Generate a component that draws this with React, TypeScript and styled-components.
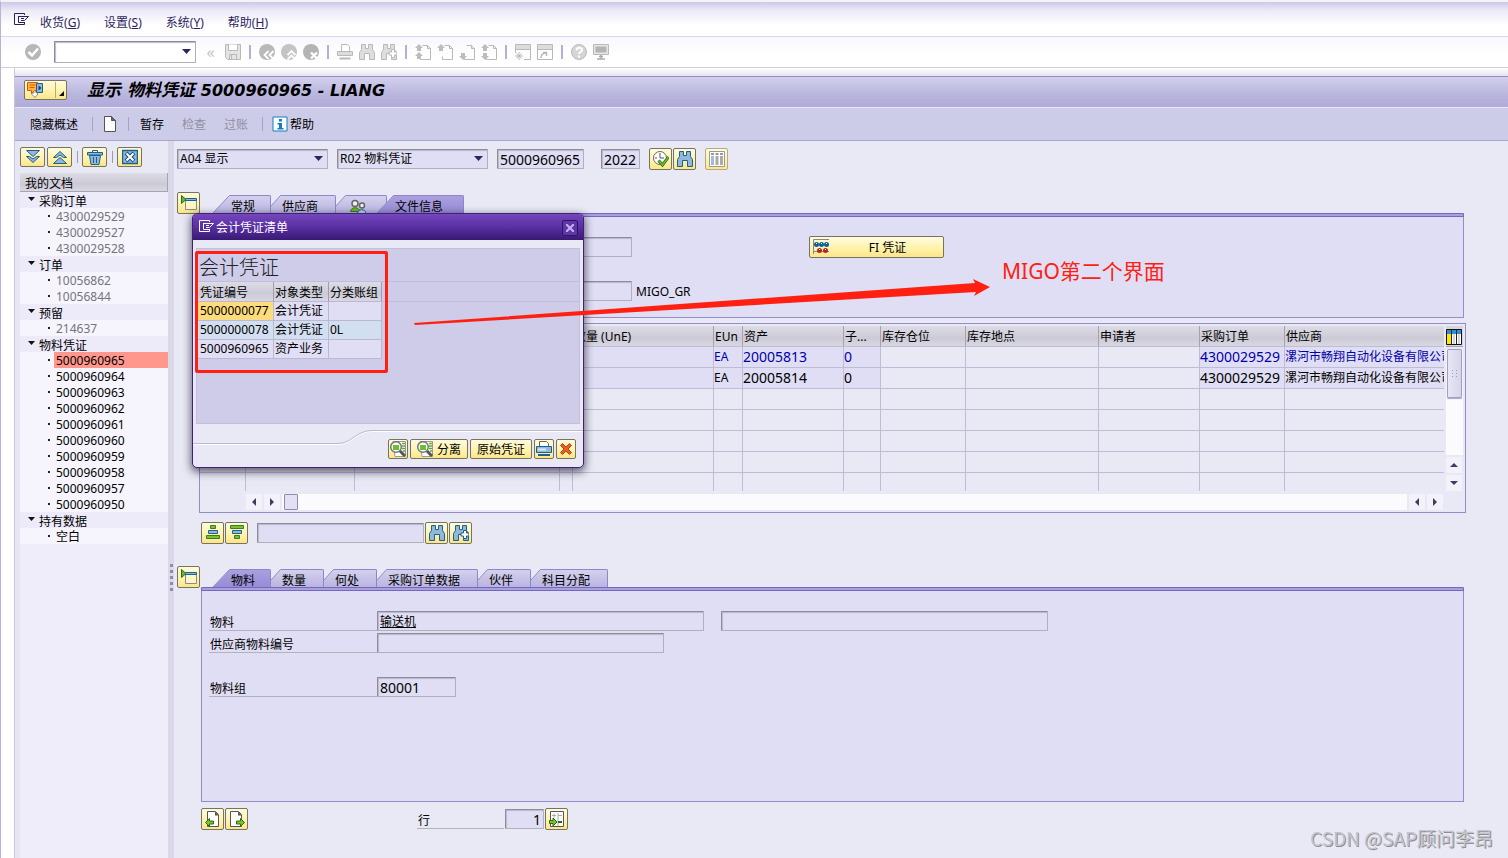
import React from "react";
import styled, { createGlobalStyle } from "styled-components";

const SANS = '"Noto Sans", "Noto Sans CJK SC", sans-serif';

const GlobalStyle = createGlobalStyle`
  *, *::before { box-sizing: border-box; }
  body { margin: 0; background: #e9e9f5; }
  button, input, select { font: inherit; color: inherit; margin: 0; }
  h1, h2 { margin: 0; font-weight: 400; }
`;

/* ---------- icons ---------- */

type IconName =
  | "menu" | "ok" | "save" | "back" | "up" | "cancel" | "print" | "find" | "findNext"
  | "blueFind" | "blueFindNext"
  | "pageTop" | "pageUp" | "pageDown" | "pageEnd" | "session" | "shortcut" | "help" | "monitor"
  | "services" | "doc" | "info" | "expandAll" | "collapseAll" | "trash" | "closeBox"
  | "execute" | "columns" | "overview" | "people" | "balls" | "asc" | "desc"
  | "prevItem" | "nextItem" | "gotoItem" | "details" | "printColor" | "redX" | "config";

const G = "#b9b9b9";
const B = "#1f5f8e";
const LB = "#8fb8da";

const binoculars = (stroke: string, fill: string) => (
  <path d="M2.500.5h4v4h3v-4h4v5l2 3v7h-5v-6h-5v6h-5v-7l2-3z" fill={fill} stroke={stroke} />
);
const plusMark = (stroke: string) => (
  <path d="M10.500 5.500h3v2.500h2.500v3h-2.500v2.500h-3v-2.500h-2.500v-3h2.500z" fill="#fff" stroke={stroke} />
);

const page = <path d="M7.500 1.500h5l3 3v11h-10v-3M12.500 1.500v3h3" fill="none" stroke={G} />;
const upArrow = (y: number) => <path d={`M4 ${y}l4 4h-2v3h-4v-3h-2z`} fill="#bdbdbd" />;
const downArrow = (y: number) => <path d={`M4 ${y}l4-4h-2v-3h-4v3h-2z`} fill="#bdbdbd" />;

const drawings: Record<IconName, React.ReactNode> = {
  menu: <path d="M11.500 3V1.500H1.500v11h10V10M5.500 4.500H15.500l-4 4H8M5.500 4v6.500h6M8 6.500h3M8 8.500h2" fill="none" stroke="currentColor" />,
  ok: <><circle cx="8" cy="8" r="8" fill="#b7b7b7" /><path d="M3.500 8l3.500 3.500 6-7" fill="none" stroke="#fff" strokeWidth="2.500" /></>,
  save: <><path d="M.5.5h15v15h-13l-2-2z" fill="#e4e4e4" stroke={G} /><path d="M3.500.5v6h9v-6" fill="#fff" stroke={G} /><path d="M4.500 15.500v-5h7v5M6.500 11v4" fill="none" stroke={G} /></>,
  back: <><circle cx="8" cy="8" r="8" fill={G} /><path d="M9.500 7l-4 4 4 4M14.500 7l-4 4 4 4" fill="none" stroke="#fff" strokeWidth="1.800" /></>,
  up: <><circle cx="8" cy="8" r="8" fill="#c4c4c4" /><path d="M6.500 11l4-4 4 4M6.500 15.500l4-4 4 4" fill="none" stroke="#fff" strokeWidth="1.800" /></>,
  cancel: <><circle cx="8" cy="8" r="8" fill="#b4b4b4" /><path d="M8 8.500l6 6M14 8.500l-6 6" fill="none" stroke="#fff" strokeWidth="2.400" /></>,
  print: <><path d="M4.500 7V.5h6l2 2V7" fill="#fff" stroke={G} /><path d="M.5 7.500h15v4h-15z" fill="#dcdcdc" stroke={G} /><path d="M2.500 14.500h11" stroke={G} strokeWidth="2" /></>,
  find: binoculars(G, "#dedede"),
  findNext: <>{binoculars(G, "#dedede")}{plusMark(G)}</>,
  blueFind: binoculars(B, LB),
  blueFindNext: <>{binoculars(B, LB)}{plusMark(B)}</>,
  pageTop: <>{page}{upArrow(0)}{upArrow(8)}</>,
  pageUp: <>{page}{upArrow(0)}</>,
  pageDown: <>{page}{downArrow(16)}</>,
  pageEnd: <>{page}{upArrow(0)}{downArrow(16)}</>,
  session: <><path d="M.5 9V.5h15v15H9" fill="none" stroke={G} /><path d="M1 1h14v4H1z" fill="#dcdcdc" /><path d="M.5 5.500h15M4 8v8M0 12h8M1.500 9.500l5 5M6.500 9.500l-5 5" stroke={G} /></>,
  shortcut: <><path d="M.5.5h15v15H.5z" fill="#fff" stroke={G} /><path d="M1 1h14v4H1z" fill="#dcdcdc" /><path d="M.5 5.500h15" stroke={G} /><path d="M4 14c0-3 1-5 5-5M6 8.500h3.500v3.500" fill="none" stroke={G} strokeWidth="1.500" /></>,
  help: <><circle cx="8" cy="8" r="7.500" fill="#d5d5d5" stroke={G} /><path d="M5.500 6.500c0-4 5.500-3.500 5.500-.5 0 2-3 2-3 4M8 11.500v2" fill="none" stroke="#fff" strokeWidth="2" /></>,
  monitor: <><path d="M.5.5h15v10H.5z" fill="#e6e6e6" stroke={G} /><path d="M2.500 2.500h11v6h-11z" fill="#b4b4b4" /><path d="M8 11v4M4 15h8M6 12.500h4" stroke="#aaa" strokeWidth="1.500" /></>,
  services: <><path d="M.5.5h10v8h-3l-3 3v-3h-4z" fill="#ffb836" stroke="#d8521c" /><path d="M2.500 3h6M2.500 5.500h5" stroke="#d8521c" /><path d="M9.500 1.500h6v9h-6z" fill={LB} stroke={B} /><path d="M11.500 3.500v5l3-2.500z" fill="#173c6c" /><path d="M5 12.500l3-3 3 2.500-3 3.500z" fill="#fff" stroke="#888" /></>,
  doc: <><path d="M2.500.5h7l4 4v11h-11z" fill="#fff" stroke="#555" /><path d="M9.500.5v4h4z" fill="#666" stroke="#555" /></>,
  info: <><path d="M1 1h14v14H1z" fill="#fff" stroke="#0f7fc4" /><path d="M7 3h3v2.500H7zM5.500 7H10v5h1.500v1.500h-6V12H7V8.500H5.500z" fill="#0f7fc4" /></>,
  expandAll: <><path d="M1.500 1.500h13l-6.500 6z" fill={LB} stroke={B} /><path d="M1.500 7.500h3l3.500 2.500 3.500-2.500h3l-6.500 6z" fill={LB} stroke={B} /></>,
  collapseAll: <><path d="M8 2.500l6.500 6h-3L8 6 4.500 8.500h-3z" fill={LB} stroke={B} /><path d="M1.500 14.500l6.500-6 6.500 6z" fill={LB} stroke={B} /></>,
  trash: <><path d="M2.500 6.500h11l-1.500 9H4z" fill={LB} stroke={B} /><path d="M.5 3.500h15v2.500h-15z" fill={LB} stroke={B} /><path d="M5.500 3V1.500h5V3M6.500 8v6M9.500 8v6" fill="none" stroke={B} /></>,
  closeBox: <><path d="M.5 1.500h15v13H.5z" fill={LB} stroke={B} strokeWidth="1.500" /><path d="M4 4l8 8M12 4l-8 8" stroke="#1d4f78" strokeWidth="4" /><path d="M4.500 4.500l7 7M11.500 4.500l-7 7" stroke="#fff" strokeWidth="2" /></>,
  execute: <><circle cx="7" cy="7" r="6.500" fill="#fff" stroke="#666" /><path d="M7 2v5h4M2 7h2M7 10v2" fill="none" stroke="#555" /><path d="M5.500 9.500l4 4.500 6-8" fill="none" stroke="#2e6a1c" strokeWidth="3" /><path d="M5.500 9.500l4 4.500 6-8" fill="none" stroke="#6cbf2c" strokeWidth="1.500" /></>,
  columns: <><path d="M.5.5h15v15H.5z" fill="#fff" stroke="#999" /><path d="M2 2h3v2H2zM6.500 2h3v2h-3zM11 2h3v2h-3z" fill="#999" /><path d="M2 5h3v9H2z" fill="#9dbfd0" /><path d="M6.500 5h3v9h-3zM11 5h3v9h-3z" fill="#aaa" /></>,
  overview: <><path d="M4.500 5v9.500h11V5" fill="#fdf6c8" stroke="#8a8a8a" /><path d="M4.500 3.500h11v2h-11z" fill={LB} stroke={B} /><path d="M.5.5v8l4.500-4z" fill="#6cb52d" stroke="#2e6a1c" /></>,
  people: <><circle cx="5" cy="4.500" r="3" fill="#eee" stroke="#666" strokeWidth="1.500" /><path d="M.5 12.500c0-5 9-5 9 0z" fill="#6cb52d" stroke="#3d7a1c" /><circle cx="12" cy="6.500" r="2.500" fill="#eee" stroke="#666" strokeWidth="1.500" /><path d="M7.500 14.500c0-5 8.500-5 8.500 0z" fill="#b5d9ee" stroke={B} /></>,
  balls: <><path d="M.5 15V.5H16M0 12.500h16" fill="none" stroke="#888" /><g fill="#0f5f9e"><circle cx="3.500" cy="5.500" r="2.500" /><circle cx="8.500" cy="5.500" r="2.500" /><circle cx="13.500" cy="5.500" r="2.500" /></g><g fill="#b82418"><circle cx="6.500" cy="11.500" r="2.500" /><circle cx="12.500" cy="11.500" r="2.500" /></g><path d="M3 4.500h1M8 4.500h1M13 4.500h1M6 10.500h1M12 10.500h1" stroke="#fff" /></>,
  asc: <><path d="M5.500 .5h5v3h-5zM1.500 10.500h13v3h-13z" fill="#7cc02c" stroke="#3d7a2c" /><path d="M3.500 5.500h9v3h-9z" fill={LB} stroke={B} /></>,
  desc: <><path d="M5.500 10.500h5v3h-5zM1.500 .5h13v3h-13z" fill="#7cc02c" stroke="#3d7a2c" /><path d="M3.500 5.500h9v3h-9z" fill={LB} stroke={B} /></>,
  prevItem: <><path d="M2.500.5h8l3 3v12h-11z" fill="#fff" stroke="#555" /><path d="M10 .5v4h4z" fill="#555" /><path d="M.5 11.500l4-4v2.500h4v3h-4v2.500z" fill="#7cc02c" stroke="#2e6a1c" /></>,
  nextItem: <><path d="M1.500.5h8l3 3v12h-11z" fill="#fff" stroke="#555" /><path d="M9 .5v4h4z" fill="#555" /><path d="M15.500 11.500l-4-4v2.500h-4v3h4v2.500z" fill="#7cc02c" stroke="#2e6a1c" /></>,
  gotoItem: <><path d="M1.500.5h13v15h-13z" fill="#fff" stroke="#555" /><path d="M3 4.500h4M5 2.500v4M9 4.500h4M9 2v13" stroke="#aaa" /><path d="M9 11h4" stroke="#2e6a1c" strokeWidth="2" /><path d="M8 11l-4-4v2.500H.5v3H4V15z" fill="#7cc02c" stroke="#2e6a1c" /></>,
  details: <><path d="M3 .5h12.500v15H5z" fill="#fff" stroke="#999" /><path d="M12 2.500h3M12 5h3M12 7.500h3M13 10h2" stroke="#5fa82c" strokeWidth="1.500" /><circle cx="6" cy="6" r="5.300" fill="#fff" stroke="#777" strokeWidth="1.500" /><path d="M3 4h6v5H3z" fill="#6cc02c" /><path d="M10 10l5 5" stroke="#555" strokeWidth="3" /></>,
  printColor: <><path d="M3.500 6V.5h7l2 2V6" fill="#fff" stroke="#666" /><path d="M.5 5.500h15v6h-15z" fill={LB} stroke={B} /><path d="M2 14h12" stroke={B} strokeWidth="2" /><path d="M2 8.500h8" stroke="#dcecf8" strokeWidth="2" /></>,
  redX: <path d="M2.500 4.500l2-2L8 6l3.500-3.500 2 2L10 8l3.500 3.500-2 2L8 10l-3.500 3.500-2-2L6 8z" fill="#e8601c" stroke="#b8401c" />,
  config: <><path d="M.5.5h15v15H.5z" fill="#fff" stroke="#111" /><path d="M1 1h14v4H1z" fill="#2f8fd0" /><path d="M1 5h4v10H1z" fill="#ffe600" /><path d="M5.500 1v14M10.500 1v14" stroke="#222" /><path d="M8 5v10M13 5v10" stroke="#d5d5e0" strokeWidth="2" /></>,
};

const Glyph = styled.svg`
  display: block;
  flex: none;
`;

const Icon = ({ name }: { name: IconName }) => (
  <Glyph width="16" height="16" viewBox="0 0 16 16" aria-hidden="true">
    {drawings[name]}
  </Glyph>
);

/* ---------- shared parts ---------- */

const IconButton = styled.button<{ $w?: number; $h?: number; $dim?: boolean }>`
  flex: none;
  display: flex;
  align-items: center;
  justify-content: center;
  gap: 4px;
  width: ${(p) => (p.$w ? `${p.$w}px` : "auto")};
  height: ${(p) => p.$h ?? 22}px;
  padding: 0;
  border: 1px solid ${(p) => (p.$dim ? "#b4ab86" : "#77735c")};
  border-radius: 2px;
  background: linear-gradient(#fffbe0, #fff2a8 60%, #fbe58c);
  color: #000;
  white-space: nowrap;

  span { padding-top: 2px; }
`;

const FlatButton = styled.button<{ $muted?: boolean; $gap?: number }>`
  display: flex;
  align-items: center;
  gap: 2px;
  margin-right: ${(p) => p.$gap ?? 0}px;
  padding: 0;
  border: 0;
  background: none;
  line-height: 16px;
  color: ${(p) => (p.$muted ? "#9090a0" : "#000")};

  span { padding-top: 2px; }
`;

const Field = styled.input<{ $w: number; $big?: boolean; $right?: boolean; $link?: boolean }>`
  flex: none;
  width: ${(p) => p.$w}px;
  height: 20px;
  padding: 0 2px;
  border: 1px solid #b0b0bc;
  border-top-color: #8c8c9a;
  border-left-color: #8c8c9a;
  border-radius: 1px;
  box-shadow: inset 1px 1px 1px #b9b8cc;
  background: #e0def4;
  font-size: ${(p) => (p.$big ? 14 : 12)}px;
  line-height: 16px;
  text-align: ${(p) => (p.$right ? "right" : "left")};
  text-decoration: ${(p) => (p.$link ? "underline" : "none")};
  outline: none;
`;

const SelectWrap = styled.div<{ $w: number; $white?: boolean }>`
  position: relative;
  width: ${(p) => p.$w}px;
  height: ${(p) => (p.$white ? 22 : 20)}px;

  select {
    appearance: none;
    display: block;
    width: 100%;
    height: 100%;
    padding: 0 20px 0 2px;
    border: 1px solid #b0b0bc;
    border-top-color: #8c8c9a;
    border-left-color: #8c8c9a;
    border-radius: 1px;
    box-shadow: inset 1px 1px 1px #b9b8cc;
    background: ${(p) => (p.$white ? "#fff" : "#e0def4")};
    outline: none;
  }
  svg {
    position: absolute;
    right: 5px;
    top: 50%;
    margin-top: -3px;
    pointer-events: none;
  }
`;

const Select = ({ label, value, w, white }: { label: string; value: string; w: number; white?: boolean }) => (
  <SelectWrap $w={w} $white={white}>
    <select aria-label={label} defaultValue={value}>
      <option>{value}</option>
    </select>
    <svg width="9" height="5" viewBox="0 0 9 5"><path d="M0 0h9L4.500 5z" fill="#33225f" /></svg>
  </SelectWrap>
);

const Separator = styled.span`
  flex: none;
  width: 1px;
  height: 14px;
  background: #a79fd0;
`;

/* ---------- frame ---------- */

const Screen = styled.div`
  position: relative;
  display: flex;
  flex-direction: column;
  min-height: 100vh;
  overflow: hidden;
  border-top: 2px solid #f4f3fa;
  border-left: 1px solid #b9b3d6;
  background: #fff;
  font: 12px/16px ${SANS};
  color: #000;
`;

const MenuBar = styled.nav`
  display: flex;
  align-items: center;
  gap: 24px;
  height: 35px;
  padding: 7px 12px 0;
  border-bottom: 1px solid #d8d6ea;
  background: linear-gradient(#cbc7e6, #eceaf6 25%, #fff 70%);
  color: #2d1f5e;
`;

const MenuItem = styled.button`
  padding: 0;
  border: 0;
  background: none;
`;

const MenuIcon = styled.span`
  margin-right: -13px;
  padding-bottom: 5px;
`;

const StandardBar = styled.div`
  display: flex;
  align-items: center;
  gap: 6px;
  height: 31px;
  padding: 0 24px 1px;
  border-bottom: 1px solid #cfcfd8;
  background: linear-gradient(#f8f7fd, #fff 60%);

  ${Separator} {
    width: 2px;
    margin: 0 2px;
    background: #b5aede;
  }
`;

const CommandSlot = styled.div`
  margin-left: 7px;
`;

const Chevrons = styled.button`
  width: 17px;
  padding: 0;
  border: 0;
  background: none;
  color: #c4c4c4;
  font-size: 16px;
  line-height: 16px;
`;

const ToolButton = styled.button`
  padding: 0;
  border: 0;
  background: none;
`;

const Session = styled.div`
  flex: 1;
  display: flex;
  flex-direction: column;
  margin-left: 13px;
  padding-top: 8px;
  background: linear-gradient(#fff, #e4e3f0 8px);
  border-left: 1px solid #c9c4e2;
`;

const TitleBar = styled.header`
  display: flex;
  align-items: center;
  gap: 20px;
  height: 32px;
  padding: 0 9px 4px;
  border-top: 1px solid #948dbb;
  border-bottom: 1px solid #e9e8f5;
  background: linear-gradient(#d3d0ee, #bab7de 55%, #b0aad9);

  h1 {
    font: italic bold 17px/20px "DejaVu Sans", "Noto Sans CJK SC", sans-serif;
  }
  h1 span { font-size: 16px; }
`;

const ServiceButton = styled(IconButton)`
  justify-content: flex-start;
  padding-left: 2px;
  position: relative;

  span {
    position: absolute;
    right: 10px;
    top: 1px;
    bottom: 1px;
    border-left: 1px solid #b5ad6a;
  }
  svg:last-child {
    position: absolute;
    right: 2px;
    bottom: 3px;
  }
`;

const AppBar = styled.div`
  display: flex;
  align-items: center;
  height: 33px;
  padding: 0 15px;
  border-bottom: 1px solid #a9a3cf;
  background: #cdcce8;

  ${Separator} { margin: 0 9px 0 14px; }
`;

const Body = styled.div`
  flex: 1;
  display: flex;
  background: #e9e9f5;
`;

/* ---------- document tree ---------- */

const Sidebar = styled.aside`
  flex: none;
  width: 153px;
  padding-left: 5px;
  background: linear-gradient(90deg, #e6e5f4 5px, #efedfa 5px);
`;

const TreeTools = styled.div`
  display: flex;
  align-items: center;
  gap: 2px;
  padding: 6px 0;
  background: #e9e9f5;

  ${Separator} {
    height: 12px;
    margin: 0 2px 0 3px;
    background: #9c9caa;
  }
`;

const TreeHead = styled.div`
  height: 19px;
  padding: 3px 5px 0;
  line-height: 15px;
  border-bottom: 1px solid #a5a4b2;
  border-right: 1px solid #a5a4b2;
  background: linear-gradient(#dddce6, #cbcad6 60%, #d8d7e2);
`;

const Tree = styled.ul`
  list-style: none;
  margin: 0;
  padding: 0;
`;

const TreeGroup = styled.li`
  display: flex;
  align-items: flex-start;
  gap: 4px;
  height: 16px;
  padding-left: 8px;
  background: #edebf9;
  line-height: 20px;

  svg { margin-top: 5px; }
`;

const TreeLeaf = styled.li<{ $muted?: boolean; $on?: boolean }>`
  display: flex;
  align-items: center;
  height: 16px;
  padding-left: 28px;
  background: #f6f5fd;

  &::before {
    content: "";
    width: 2px;
    height: 2px;
    margin: 0 4px 1px 0;
    background: #222;
  }
  span {
    flex: 1;
    height: 16px;
    padding-left: 2px;
    line-height: 18px;
    color: ${(p) => (p.$muted ? "#74747c" : "#000")};
    background: ${(p) => (p.$on ? "#ff978c" : "none")};
  }
`;

const Splitter = styled.div`
  flex: none;
  display: flex;
  flex-direction: column;
  align-items: center;
  gap: 3px;
  width: 6px;
  padding-top: 423px;
  background: #dad9ea;

  i {
    width: 3px;
    height: 3px;
    background: #8e8ca8;
  }
`;

/* ---------- main area ---------- */

const Main = styled.main`
  flex: 1;
  min-width: 0;
  padding: 7px 42px 28px 3px;
`;

const Row = styled.div<{ $indent?: number; $top?: number }>`
  display: flex;
  align-items: center;
  gap: 1px;
  margin-top: ${(p) => p.$top ?? 0}px;
  padding-left: ${(p) => p.$indent ?? 0}px;
`;

const Space = styled.span<{ $w: number }>`
  flex: none;
  width: ${(p) => p.$w}px;
`;

const TabSection = styled.section`
  display: flex;
  align-items: flex-start;
  gap: 1px;
  margin: 22px 2px 0 0;
`;

const TabColumn = styled.div`
  flex: 1;
  min-width: 0;
  padding-top: 3px;
`;

const TabList = styled.div`
  display: flex;
  padding-left: 12px;
`;

const TabButton = styled.button<{ $lap?: boolean }>`
  display: flex;
  height: 18px;
  margin-left: ${(p) => (p.$lap ? -10 : 0)}px;
  padding: 0;
  border: 0;
  background: none;
`;

const TabFace = styled.span<{ $active?: boolean; $end: number }>`
  display: flex;
  align-items: center;
  height: 18px;
  padding: 4px ${(p) => p.$end}px 0 0;
  border-top: 1px solid #8f86c8;
  border-right: 1px solid #8f86c8;
  border-top-right-radius: 2px;
  background: ${(p) => (p.$active ? "linear-gradient(#a99fe0, #978cd6)" : "linear-gradient(#d3d0ee, #bab5e0)")};
`;

const TabPanel = styled.div<{ $h: number }>`
  min-height: ${(p) => p.$h}px;
  border: 1px solid #948bcb;
  border-top: 0;
  background: #e0def4;

  &::before {
    content: "";
    display: block;
    height: 4px;
    margin: 0 -1px;
    border: 1px solid #7568bb;
    border-radius: 2px 2px 0 0;
    background: #a8a0e0;
  }
`;

type TabSpec = { label?: string; icon?: IconName; active?: boolean };

const Tabs = ({ tabs }: { tabs: TabSpec[] }) => (
  <TabList role="tablist">
    {tabs.map((t, i) => {
      const wide = i === 0 || t.active;
      const lap = !!t.active && i > 0;
      const w = wide ? 18 : 11;
      const top = t.active ? "#a99fe0" : "#d3d0ee";
      const bottom = t.active ? "#978cd6" : "#bab5e0";
      const id = `slant${t.label ?? t.icon}`;
      return (
        <TabButton key={id} role="tab" aria-selected={!!t.active} aria-label={t.label ?? "合作伙伴"} $lap={lap}>
          <Glyph width={w} height="18" viewBox={`0 0 ${w} 18`} aria-hidden="true">
            <defs>
              <linearGradient id={id} x1="0" y1="0" x2="0" y2="1">
                <stop offset="0" stopColor={top} />
                <stop offset="1" stopColor={bottom} />
              </linearGradient>
            </defs>
            <path d={wide ? "M0 18L17 .5h1V18z" : "M0 11L10 .5h1V18H0z"} fill={`url(#${id})`} />
            <path d={wide ? "M0 18L16.500 .5H18" : "M0 11L9.500 .5H11"} fill="none" stroke="#8f86c8" />
          </Glyph>
          <TabFace $active={t.active} $end={lap ? 20 : t.icon ? 20 : i === 0 ? 15 : 17}>
            {t.icon ? <Space $w={3} /> : null}
            {t.icon ? <Icon name={t.icon} /> : t.label}
          </TabFace>
        </TabButton>
      );
    })}
  </TabList>
);

const Form = styled.div<{ $top: number; $gap: number }>`
  display: flex;
  flex-direction: column;
  gap: ${(p) => p.$gap}px;
  padding: ${(p) => p.$top}px 0 0 7px;
`;

const FormRow = styled.div<{ $apart?: boolean }>`
  display: flex;
  align-items: center;
  margin-top: ${(p) => (p.$apart ? 22 : 0)}px;
`;

const FieldLabel = styled.label<{ $w: number }>`
  flex: none;
  width: ${(p) => p.$w}px;
  height: 20px;
  padding: 4px 1px 0;
  line-height: 15px;
  border-bottom: 1px solid #b2b2ba;
`;

const FieldNote = styled.span`
  padding: 2px 0 0 4px;
`;

const FiButton = styled(IconButton)`
  position: relative;
  svg {
    position: absolute;
    left: 3px;
    top: 2px;
  }
  span { padding-left: 22px; }
`;

/* ---------- item table ---------- */

const ItemBox = styled.section`
  margin: 5px 0 0 22px;
  padding: 2px 2px 2px 0;
  border: 1px solid #948bcb;
`;

const ItemGrid = styled.div`
  display: flex;
  height: 165px;
`;

const ItemScroller = styled.div`
  flex: 1;
  min-width: 0;
  overflow: hidden;
`;

const ItemTable = styled.table`
  width: 100%;
  table-layout: fixed;
  border-spacing: 0;

  th, td {
    height: 21px;
    padding: 0;
    border-right: 1px solid #bfbdd6;
    border-bottom: 1px solid #bfbdd6;
    font-weight: 400;
    text-align: left;
    line-height: 20px;
    white-space: nowrap;
    overflow: hidden;
  }
  th {
    padding: 2px 0 0 1px;
    line-height: 18px;
    border-right-color: #a3a2b3;
    background: linear-gradient(#dddce6, #cbcad6 60%, #d8d7e2);
  }
  th:last-child, td:last-child { border-right: 0; }
`;

const ItemRow = styled.tr<{ $blue?: boolean }>`
  color: ${(p) => (p.$blue ? "#0000a8" : "#000")};
`;

const Cell = styled.td<{ $fill?: boolean; $num?: boolean }>`
  background: ${(p) => (p.$fill ? "#e0def4" : "#e9e9f5")};
  font-size: ${(p) => (p.$num ? 14 : 12)}px;
`;

const VScroll = styled.div`
  flex: none;
  display: flex;
  flex-direction: column;
  gap: 2px;
  width: 19px;
  padding-left: 2px;
`;

const ConfigButton = styled.button`
  height: 21px;
  padding: 1px 0 0 0;
  border: 0;
  border-bottom: 1px solid #a3a2b3;
  background: #d6d5e0;
`;

const VTrack = styled.div`
  flex: 1;
  background: #fbfbfd;
`;

const VThumb = styled.div`
  display: flex;
  align-items: center;
  justify-content: center;
  width: 15px;
  height: 49px;
  margin-left: 1px;
  border: 1px solid #a29fc2;
  border-radius: 1px;
  background: linear-gradient(90deg, #e8e7f6, #d6d5ea);
  box-shadow: 0 1px 1px #aaa8c4;
`;

const ArrowButton = styled.button`
  flex: none;
  display: flex;
  align-items: center;
  justify-content: center;
  width: 16px;
  height: 16px;
  padding: 0;
  border: 0;
  background: #f3f2fb;
`;

const arrowPaths = { up: "M0 6h8L4 2z", down: "M0 2h8L4 6z", left: "M6 0v8L2 4z", right: "M2 0v8l4-4z" };

const Arrow = ({ dir, label }: { dir: keyof typeof arrowPaths; label: string }) => (
  <ArrowButton aria-label={label}>
    <svg width="8" height="8" viewBox="0 0 8 8"><path d={arrowPaths[dir]} fill="#3f3a66" /></svg>
  </ArrowButton>
);

const HScroll = styled.div`
  display: flex;
  align-items: center;
  gap: 2px;
  height: 16px;
  margin-top: 3px;
  padding: 0 20px 0 46px;
`;

const HTrack = styled.div`
  flex: 1;
  height: 16px;
  background: #fbfbfd;
`;

const HThumb = styled.div`
  width: 14px;
  height: 16px;
  margin-left: 2px;
  border: 1px solid #8f8bb4;
  border-radius: 1px;
  background: #e2e0f2;
`;

const columns: { title: string; width?: number }[] = [
  { title: "", width: 46 }, { title: "", width: 109 }, { title: "", width: 205 }, { title: "", width: 13 },
  { title: "数量 (UnE)", width: 141 }, { title: "EUn", width: 29 }, { title: "资产", width: 101 },
  { title: "子...", width: 37 }, { title: "库存仓位", width: 85 }, { title: "库存地点", width: 133 },
  { title: "申请者", width: 101 }, { title: "采购订单", width: 85 }, { title: "供应商" },
];

const FILLED = [0, 1, 2, 3, 4, 5, 6, 7, 11, 12];
const NUMERIC = [6, 7, 11];
const vendor = "漯河市畅翔自动化设备有限公司";
const items: string[][] = [
  ["", "", "", "", "", "EA", "20005813", "0", "", "", "", "4300029529", vendor],
  ["", "", "", "", "", "EA", "20005814", "0", "", "", "", "4300029529", vendor],
  [], [], [], [], [],
];

/* ---------- dialog ---------- */

const Dialog = styled.div`
  position: absolute;
  left: 191px;
  top: 211px;
  width: 392px;
  border: 1px solid #3f2179;
  border-radius: 5px;
  background: #e9e9f5;
  box-shadow: 0 3px 8px 1px rgba(20, 15, 40, 0.65);
`;

const DialogTitle = styled.div`
  display: flex;
  align-items: center;
  gap: 2px;
  height: 26px;
  padding: 0 5px;
  border-radius: 4px 4px 0 0;
  background: linear-gradient(#7546bd, #5a30a3 50%, #381972);
  color: #fff;

  h2 {
    flex: 1;
    padding-top: 2px;
    font-size: 12px;
    line-height: 16px;
  }
`;

const CloseButton = styled.button`
  display: flex;
  align-items: center;
  justify-content: center;
  width: 16px;
  height: 16px;
  margin-top: 2px;
  padding: 0;
  border: 1px solid #2d1464;
  border-radius: 2px;
  background: #5f36a8;
`;

const DialogBody = styled.div`
  height: 176px;
  margin: 8px 3px 0;
  border: 1px solid #c2bfdc;
  background: #cecce9;
`;

const DialogCaption = styled.h2`
  height: 33px;
  padding: 6px 2px 0;
  border-bottom: 1px solid #c0bddb;
  font-size: 20px;
  font-weight: 300;
  line-height: 26px;
  color: #222;
`;

const VoucherTable = styled.table`
  width: 100%;
  table-layout: fixed;
  border-spacing: 0;

  th, td {
    height: 19px;
    padding: 0 0 0 1px;
    border-right: 1px solid #bbb8d4;
    border-bottom: 1px solid #bbb8d4;
    background: #e0def4;
    font-weight: 400;
    text-align: left;
    line-height: 18px;
    white-space: nowrap;
  }
  th {
    height: 20px;
    padding-top: 2px;
    line-height: 17px;
    border-right-color: #9f9eb0;
    background: linear-gradient(#dddce6, #cbcad6 60%, #d8d7e2);
  }
  tr > :first-child { padding-left: 3px; }
  tr:nth-child(2) td { background: #d2dff0; }
  tbody tr:first-child td:first-child { background: #fedb7c; }
  tr > :last-child, tbody tr:nth-child(n) > :last-child {
    border-right: 0;
    border-bottom-color: transparent;
    background: none;
  }
  thead tr > :last-child { border-bottom-color: #c0bddb; }
`;

const DialogFoot = styled.div`
  position: relative;
  display: flex;
  justify-content: flex-end;
  gap: 2px;
  padding: 15px 7px 8px;

  > svg {
    position: absolute;
    left: 0;
    top: 6px;
  }
  button { position: relative; }
`;

/* ---------- annotations ---------- */

const RedBox = styled.div`
  position: absolute;
  left: 194px;
  top: 249px;
  width: 193px;
  height: 122px;
  border: 3px solid #ff2012;
  border-radius: 2px;
  pointer-events: none;
`;

const RedArrow = styled.svg`
  position: absolute;
  left: 413px;
  top: 275px;
  pointer-events: none;
`;

const RedNote = styled.p`
  position: absolute;
  left: 1001px;
  top: 255px;
  margin: 0;
  font-size: 21px;
  line-height: 28px;
  color: #ff2012;
`;

const Watermark = styled.p`
  position: absolute;
  right: 15px;
  bottom: 6px;
  margin: 0;
  font: 19px/28px "Noto Sans CJK SC", sans-serif;
  color: #c4c4ca;
  text-shadow: 1px 1px 0 #8d8d94;
`;

/* ---------- data ---------- */

const tree: { title: string; muted?: boolean; leaves: string[] }[] = [
  { title: "采购订单", muted: true, leaves: ["4300029529", "4300029527", "4300029528"] },
  { title: "订单", muted: true, leaves: ["10056862", "10056844"] },
  { title: "预留", muted: true, leaves: ["214637"] },
  {
    title: "物料凭证",
    leaves: ["5000960965", "5000960964", "5000960963", "5000960962", "5000960961",
      "5000960960", "5000960959", "5000960958", "5000960957", "5000960950"],
  },
  { title: "持有数据", leaves: ["空白"] },
];

const toolGroups: [IconName, string][][] = [
  [["back", "返回"], ["up", "退出"], ["cancel", "取消"]],
  [["print", "打印"], ["find", "查找"], ["findNext", "查找下一个"]],
  [["pageTop", "首页"], ["pageUp", "上一页"], ["pageDown", "下一页"], ["pageEnd", "末页"]],
  [["session", "新建会话"], ["shortcut", "创建快捷方式"]],
  [["help", "帮助"], ["monitor", "定制本地布局"]],
];

const menus: [string, string][] = [["收货", "G"], ["设置", "S"], ["系统", "Y"], ["帮助", "H"]];

const vouchers = [
  ["5000000077", "会计凭证", ""],
  ["5000000078", "会计凭证", "0L"],
  ["5000960965", "资产业务", ""],
];

export default function App() {
  return (
    <>
      <GlobalStyle />
      <Screen>
        <MenuBar>
          <MenuIcon><Icon name="menu" /></MenuIcon>
          {menus.map(([name, key]) => (
            <MenuItem key={key}>{name}(<u>{key}</u>)</MenuItem>
          ))}
        </MenuBar>

        <StandardBar>
          <ToolButton aria-label="确认"><Icon name="ok" /></ToolButton>
          <CommandSlot><Select label="命令" value="" w={142} white /></CommandSlot>
          <Chevrons>«</Chevrons>
          <ToolButton aria-label="保存"><Icon name="save" /></ToolButton>
          {toolGroups.map((group, i) => (
            <React.Fragment key={i}>
              <Separator />
              {group.map(([name, label]) => (
                <ToolButton key={name} aria-label={label}><Icon name={name} /></ToolButton>
              ))}
            </React.Fragment>
          ))}
        </StandardBar>

        <Session>
          <TitleBar>
            <ServiceButton $w={43} $h={20} aria-label="对象服务">
              <Icon name="services" />
              <span />
              <svg width="5" height="5" viewBox="0 0 5 5"><path d="M5 0v5H0z" fill="#111" /></svg>
            </ServiceButton>
            <h1>显示 物料凭证 <span>5000960965 - LIANG</span></h1>
          </TitleBar>

          <AppBar>
            <FlatButton><span>隐藏概述</span></FlatButton>
            <Separator />
            <FlatButton aria-label="新建" $gap={-4}><Icon name="doc" /></FlatButton>
            <Separator />
            <Space $w={2} />
            <FlatButton $gap={18}><span>暂存</span></FlatButton>
            <FlatButton $muted $gap={18}><span>检查</span></FlatButton>
            <FlatButton $muted><span>过账</span></FlatButton>
            <Separator />
            <FlatButton><Icon name="info" /><span>帮助</span></FlatButton>
          </AppBar>

          <Body>
            <Sidebar>
              <TreeTools>
                <IconButton $w={25} $h={20} aria-label="全部展开"><Icon name="expandAll" /></IconButton>
                <IconButton $w={25} $h={20} aria-label="全部折叠"><Icon name="collapseAll" /></IconButton>
                <Separator />
                <IconButton $w={25} $h={20} aria-label="删除"><Icon name="trash" /></IconButton>
                <Separator />
                <IconButton $w={25} $h={20} aria-label="关闭"><Icon name="closeBox" /></IconButton>
              </TreeTools>
              <TreeHead>我的文档</TreeHead>
              <Tree>
                {tree.map((g) => (
                  <React.Fragment key={g.title}>
                    <TreeGroup>
                      <svg width="7" height="4" viewBox="0 0 7 4"><path d="M0 0h7L3.500 4z" fill="#111" /></svg>
                      {g.title}
                    </TreeGroup>
                    {g.leaves.map((leaf) => (
                      <TreeLeaf key={leaf} $muted={g.muted} $on={leaf === "5000960965"}>
                        <span>{leaf}</span>
                      </TreeLeaf>
                    ))}
                  </React.Fragment>
                ))}
              </Tree>
            </Sidebar>
            <Splitter><i /><i /><i /><i /><i /></Splitter>

            <Main>
              <Row>
                <Select label="操作" value="A04 显示" w={151} />
                <Space $w={7} />
                <Select label="参考凭证" value="R02 物料凭证" w={151} />
                <Space $w={7} />
                <Field $w={87} $big aria-label="凭证编号" defaultValue="5000960965" />
                <Space $w={15} />
                <Field $w={39} $big aria-label="年度" defaultValue="2022" />
                <Space $w={7} />
                <IconButton $w={23} aria-label="执行"><Icon name="execute" /></IconButton>
                <IconButton $w={23} aria-label="查找"><Icon name="blueFind" /></IconButton>
                <Space $w={7} />
                <IconButton $w={23} $dim aria-label="布局"><Icon name="columns" /></IconButton>
              </Row>

              <TabSection>
                <IconButton $w={23} aria-label="打开抬头"><Icon name="overview" /></IconButton>
                <TabColumn>
                  <Tabs tabs={[{ label: "常规" }, { label: "供应商" }, { icon: "people" }, { label: "文件信息", active: true }]} />
                  <TabPanel $h={105}>
                    <Form $top={19} $gap={23}>
                      <FormRow>
                        <Space $w={168} />
                        <Field $w={255} aria-label="文件" />
                        <Space $w={177} />
                        <FiButton $w={135}><Icon name="balls" /><span>FI 凭证</span></FiButton>
                      </FormRow>
                      <FormRow>
                        <Space $w={168} />
                        <Field $w={255} aria-label="事务代码" />
                        <FieldNote>MIGO_GR</FieldNote>
                      </FormRow>
                    </Form>
                  </TabPanel>
                </TabColumn>
              </TabSection>

              <ItemBox>
                <ItemGrid>
                  <ItemScroller>
                    <ItemTable>
                      <colgroup>
                        {columns.map((c, i) => <col key={i} width={c.width} />)}
                      </colgroup>
                      <thead>
                        <tr>{columns.map((c, i) => <th key={i}>{c.title}</th>)}</tr>
                      </thead>
                      <tbody>
                        {items.map((row, r) => (
                          <ItemRow key={r} $blue={r === 0}>
                            {columns.map((_, i) => (
                              <Cell key={i} $fill={row.length > 0 && FILLED.includes(i)} $num={NUMERIC.includes(i)}>
                                {row[i]}
                              </Cell>
                            ))}
                          </ItemRow>
                        ))}
                      </tbody>
                    </ItemTable>
                  </ItemScroller>
                  <VScroll>
                    <ConfigButton aria-label="表设置"><Icon name="config" /></ConfigButton>
                    <VTrack>
                      <VThumb>
                        <svg width="6" height="8" viewBox="0 0 6 8"><path d="M0 .5h1M4 .5h1M0 3.500h1M4 3.500h1M0 6.500h1M4 6.500h1" stroke="#9c99ba" /></svg>
                      </VThumb>
                    </VTrack>
                    <Arrow dir="up" label="向上" />
                    <Arrow dir="down" label="向下" />
                  </VScroll>
                </ItemGrid>
                <HScroll>
                  <Arrow dir="left" label="最左" />
                  <Arrow dir="right" label="向右" />
                  <HTrack><HThumb /></HTrack>
                  <Arrow dir="left" label="向左" />
                  <Arrow dir="right" label="最右" />
                </HScroll>
              </ItemBox>

              <Row $indent={24} $top={9}>
                <IconButton $w={23} aria-label="升序"><Icon name="asc" /></IconButton>
                <IconButton $w={23} aria-label="降序"><Icon name="desc" /></IconButton>
                <Space $w={7} />
                <Field $w={167} aria-label="搜索" />
                <IconButton $w={23} aria-label="查找"><Icon name="blueFind" /></IconButton>
                <IconButton $w={23} aria-label="查找下一个"><Icon name="blueFindNext" /></IconButton>
              </Row>

              <TabSection>
                <IconButton $w={23} aria-label="打开明细"><Icon name="overview" /></IconButton>
                <TabColumn>
                  <Tabs
                    tabs={[
                      { label: "物料", active: true }, { label: "数量" }, { label: "何处" },
                      { label: "采购订单数据" }, { label: "伙伴" }, { label: "科目分配" },
                    ]}
                  />
                  <TabPanel $h={215}>
                    <Form $top={20} $gap={2}>
                      <FormRow>
                        <FieldLabel $w={168} htmlFor="material">物料</FieldLabel>
                        <Field id="material" $w={327} $link defaultValue="输送机" />
                        <Space $w={17} />
                        <Field $w={327} aria-label="物料描述" />
                      </FormRow>
                      <FormRow>
                        <FieldLabel $w={168} htmlFor="vendorMaterial">供应商物料编号</FieldLabel>
                        <Field id="vendorMaterial" $w={287} />
                      </FormRow>
                      <FormRow $apart>
                        <FieldLabel $w={168} htmlFor="group">物料组</FieldLabel>
                        <Field id="group" $w={79} $big defaultValue="80001" />
                      </FormRow>
                    </Form>
                  </TabPanel>
                </TabColumn>
              </TabSection>

              <Row $indent={24} $top={6}>
                <IconButton $w={23} aria-label="上一项"><Icon name="prevItem" /></IconButton>
                <IconButton $w={23} aria-label="下一项"><Icon name="nextItem" /></IconButton>
                <Space $w={167} />
                <FieldLabel $w={87} htmlFor="line">行</FieldLabel>
                <Field id="line" $w={39} $big $right defaultValue="1" />
                <IconButton $w={23} aria-label="转到行"><Icon name="gotoItem" /></IconButton>
              </Row>
            </Main>
          </Body>
        </Session>

        <Dialog role="dialog" aria-label="会计凭证清单">
          <DialogTitle>
            <Icon name="menu" />
            <h2>会计凭证清单</h2>
            <CloseButton aria-label="关闭">
              <svg width="8" height="8" viewBox="0 0 8 8"><path d="M0 0l8 8M8 0L0 8" stroke="#c5b4f2" strokeWidth="2" /></svg>
            </CloseButton>
          </DialogTitle>
          <DialogBody>
            <DialogCaption>会计凭证</DialogCaption>
            <VoucherTable>
              <colgroup><col width="77" /><col width="55" /><col width="53" /><col /></colgroup>
              <thead>
                <tr><th>凭证编号</th><th>对象类型</th><th>分类账组</th><td /></tr>
              </thead>
              <tbody>
                {vouchers.map((v) => (
                  <tr key={v[0]}>{v.map((c, i) => <td key={i}>{c}</td>)}<td /></tr>
                ))}
              </tbody>
            </VoucherTable>
          </DialogBody>
          <DialogFoot>
            <svg width="390" height="16" viewBox="0 0 390 16" aria-hidden="true">
              <path d="M0 14.500h145c14 0 18-13 34-13h211" fill="none" stroke="#fff" />
              <path d="M0 13.500h145c14 0 18-13 34-13h211" fill="none" stroke="#bbb8d6" />
            </svg>
            <IconButton $w={20} $h={20} aria-label="选择"><Icon name="details" /></IconButton>
            <IconButton $w={58} $h={20}><Icon name="details" /><span>分离</span></IconButton>
            <IconButton $w={62} $h={20}><span>原始凭证</span></IconButton>
            <IconButton $w={20} $h={20} aria-label="打印"><Icon name="printColor" /></IconButton>
            <IconButton $w={20} $h={20} aria-label="取消"><Icon name="redX" /></IconButton>
          </DialogFoot>
        </Dialog>

        <RedBox />
        <RedArrow width="578" height="52" viewBox="0 0 578 52" aria-hidden="true">
          <path d="M0 46L561 6 559 2 576 10 560 19 562 15 1 48z" fill="#ff2012" />
        </RedArrow>
        <RedNote>MIGO第二个界面</RedNote>
        <Watermark>CSDN @SAP顾问李昂</Watermark>
      </Screen>
    </>
  );
}
